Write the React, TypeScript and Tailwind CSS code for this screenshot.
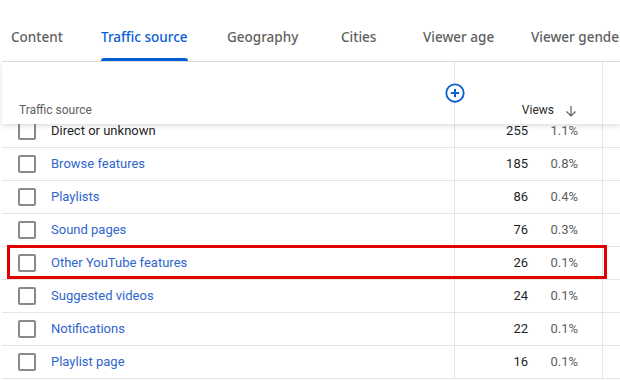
const TABS = ["Content", "Traffic source", "Geography", "Cities", "Viewer age", "Viewer gender"];
const TAB_W = ["w-[90px]", "w-[126px]", "w-[114px]", "w-[82px]", "w-[108px]", "w-auto"];

const ROWS: { name: string; views: string; pct: string; link: boolean }[] = [
  { name: "Direct or unknown", views: "255", pct: "1.1%", link: false },
  { name: "Browse features", views: "185", pct: "0.8%", link: true },
  { name: "Playlists", views: "86", pct: "0.4%", link: true },
  { name: "Sound pages", views: "76", pct: "0.3%", link: true },
  { name: "Other YouTube features", views: "26", pct: "0.1%", link: true },
  { name: "Suggested videos", views: "24", pct: "0.1%", link: true },
  { name: "Notifications", views: "22", pct: "0.1%", link: true },
  { name: "Playlist page", views: "16", pct: "0.1%", link: true },
];

function PlusCircle() {
  return (
    <svg width="22" height="22" viewBox="0 0 24 24" fill="none">
      <circle cx="12" cy="12" r="9.5" stroke="#065fd4" strokeWidth="2" fill="white" />
      <path d="M12 7.5v9M7.5 12h9" stroke="#065fd4" strokeWidth="2.2" />
    </svg>
  );
}

function ArrowDown() {
  return (
    <svg width="12" height="12" viewBox="0 0 12 12" fill="none">
      <path d="M6 1v10M1.5 6.5L6 11l4.5-4.5" stroke="#606060" strokeWidth="1.2" />
    </svg>
  );
}

export default function App() {
  return (
    <div className="relative h-[380px] w-[620px] overflow-hidden bg-white font-['Roboto',sans-serif]">
      <div className="ml-[2px]">
        {/* tabs */}
        <div className="flex h-[62px] items-stretch border-b border-[#e0e0e0] pl-[9px] font-['Noto_Sans',sans-serif] text-[13.5px] font-medium whitespace-nowrap">
          {TABS.map((t, i) => (
            <div key={t} className={"flex shrink-0 items-stretch " + TAB_W[i]}>
              <div className={"relative flex items-center pt-[13px] " + (i === 1 ? "text-[#065fd4]" : "text-[#606060]")}>
                {t}
                {i === 1 && <div className="absolute inset-x-0 bottom-0 h-[3px] rounded-t-[3px] bg-[#065fd4]" />}
              </div>
            </div>
          ))}
        </div>

        {/* table header */}
        <div className="relative z-10 grid h-[62px] grid-cols-[453px_148px_1fr] bg-white shadow-[0_2px_5px_rgba(0,0,0,0.13)]">
          <div className="flex items-end border-r border-[#e5e5e5] pb-[5px] pl-[17px] text-[12px] text-[#606060]">Traffic source</div>
          <div className="flex items-end justify-end gap-[11px] border-r border-[#e5e5e5] pb-[5px] pr-[25px] text-[12px] text-[#282828]">
            <span>Views</span>
            <span className="mb-[2px]"><ArrowDown /></span>
          </div>
          <div />
          <div className="absolute left-[442px] top-[20px]"><PlusCircle /></div>
        </div>

        {/* rows */}
        <div className="-mt-[9px]">
          {ROWS.map((r) => (
            <div key={r.name} className="grid h-[33px] grid-cols-[453px_148px_1fr] border-b border-[#e5e5e5] text-[13px]">
              <div className="flex items-center border-r border-[#e5e5e5] pl-[16px]">
                <div className="h-[18px] w-[18px] rounded-[2px] border-2 border-[#8a8a8a]" />
                <span className={"ml-[15px] " + (r.link ? "text-[#2f66cc]" : "text-[#1f1f1f]")}>{r.name}</span>
              </div>
              <div className="flex items-center justify-end border-r border-[#e5e5e5] pr-[24px]">
                <span className="text-[#1f1f1f]">{r.views}</span>
                <span className="w-[50px] text-right text-[#606060]">{r.pct}</span>
              </div>
              <div />
            </div>
          ))}
        </div>
      </div>

      {/* annotation box */}
      <div className="absolute left-[7px] top-[245px] h-[34px] w-[600px] border-[3px] border-[#e00000]" />
    </div>
  );
}
